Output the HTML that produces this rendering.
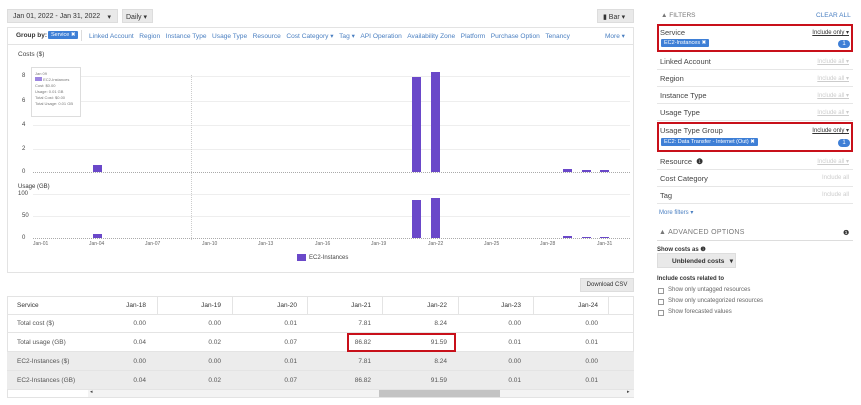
<!DOCTYPE html>
<html><head><meta charset="utf-8"><style>
*{box-sizing:border-box;margin:0;padding:0}
body{width:861px;height:405px;background:#fff;font-family:"Liberation Sans",sans-serif;color:#444;position:relative;overflow:hidden;font-size:7px}
.a{position:absolute;white-space:nowrap}
.btn{position:absolute;background:#e9e9e9;border:1px solid #ddd;font-size:7px;color:#333;padding:3px 5px;white-space:nowrap}
.lnk{color:#4a7fc1}
.gl{position:absolute;height:1px;background:#eee}
.bar{position:absolute;background:#6a48c9}
.row{position:absolute;left:7px;width:627px;height:19px;border-bottom:1px solid #e4e4e4;font-size:6.5px;color:#555}
.row span{position:absolute;top:6px}
.fr{position:absolute;left:657px;width:196px;border-bottom:1px solid #e6e6e6;height:17px;font-size:7.5px;color:#444}
.fr .l{position:absolute;left:3px;top:4px}
.fr .r{position:absolute;right:4px;top:5px;font-size:6px;color:#ccc;text-decoration:underline}
.red{position:absolute;border:2px solid #c8101a}
.chip{position:absolute;background:#3e7fd6;color:#fff;font-size:5.5px;padding:1px 3px;border-radius:1px;white-space:nowrap}
.badge{position:absolute;background:#3e7fd6;color:#fff;font-size:6px;width:12px;height:8px;border-radius:4px;text-align:center;line-height:8px}
.cb{position:absolute;left:658px;width:6px;height:6px;border:1px solid #999}
</style></head><body>
<div class="btn" style="left:7px;top:9px;width:111px;height:14px">Jan 01, 2022 - Jan 31, 2022 <span style="position:absolute;right:6px">▾</span></div>
<div class="btn" style="left:122px;top:9px;width:31px;height:14px;padding:3px 3px">Daily ▾</div>
<div class="btn" style="left:597px;top:9px;width:37px;height:14px">▮ Bar ▾</div>

<div class="a" style="left:7px;top:27px;width:627px;height:246px;border:1px solid #e3e3e3"></div>
<div class="a" style="left:8px;top:28px;width:625px;height:17px;border-bottom:1px solid #e3e3e3"></div>
<div class="a" style="left:16px;top:32px;font-size:6.5px;color:#333;font-weight:bold">Group by:</div>
<div class="chip" style="left:48px;top:31px">Service ✖</div>
<div class="a" style="left:81px;top:30px;width:1px;height:11px;background:#ddd"></div>
<div class="a lnk" style="left:89px;top:32px;font-size:6.6px">Linked Account&nbsp;&nbsp;&nbsp;Region&nbsp;&nbsp;&nbsp;Instance Type&nbsp;&nbsp;&nbsp;Usage Type&nbsp;&nbsp;&nbsp;Resource&nbsp;&nbsp;&nbsp;Cost Category ▾&nbsp;&nbsp;&nbsp;Tag ▾&nbsp;&nbsp;&nbsp;API Operation&nbsp;&nbsp;&nbsp;Availability Zone&nbsp;&nbsp;&nbsp;Platform&nbsp;&nbsp;&nbsp;Purchase Option&nbsp;&nbsp;&nbsp;Tenancy</div>
<div class="a lnk" style="left:605px;top:32px;font-size:6.5px">More ▾</div>

<div class="a" style="left:18px;top:51px;font-size:6.5px">Costs ($)</div>
<div class="a" style="left:22px;top:73px;font-size:6px">8</div>
<div class="a" style="left:22px;top:98px;font-size:6px">6</div>
<div class="a" style="left:22px;top:122px;font-size:6px">4</div>
<div class="a" style="left:22px;top:146px;font-size:6px">2</div>
<div class="a" style="left:22px;top:169px;font-size:6px">0</div>
<div class="gl" style="left:33px;top:76px;width:597px"></div>
<div class="gl" style="left:33px;top:101px;width:597px"></div>
<div class="gl" style="left:33px;top:125px;width:597px"></div>
<div class="gl" style="left:33px;top:149px;width:597px"></div>
<div class="a" style="left:33px;top:172px;width:597px;border-top:1px dotted #aaa"></div>
<div class="a" style="left:191px;top:75px;height:165px;border-left:1px dotted #ccc"></div>
<div class="bar" style="left:93px;top:165px;width:9px;height:7px"></div>
<div class="bar" style="left:412px;top:77px;width:9px;height:95px"></div>
<div class="bar" style="left:431px;top:72px;width:9px;height:100px"></div>
<div class="bar" style="left:563px;top:169px;width:9px;height:3px"></div>
<div class="bar" style="left:582px;top:170px;width:9px;height:2px"></div>
<div class="bar" style="left:600px;top:170px;width:9px;height:2px"></div>

<div class="a" style="left:31px;top:67px;width:50px;height:50px;border:1px solid #ddd;background:#fff;font-size:4px;color:#777;padding:3px;line-height:6px">Jan 09<br><span style="display:inline-block;width:7px;height:4px;background:#9d86e0"></span> EC2-Instances<br>Cost: $0.00<br>Usage: 0.01 GB<br>Total Cost: $0.00<br>Total Usage: 0.01 GB</div>

<div class="a" style="left:18px;top:184px;font-size:6px;color:#333">Usage (GB)</div>
<div class="a" style="left:18px;top:191px;font-size:6px">100</div>
<div class="a" style="left:22px;top:213px;font-size:6px">50</div>
<div class="a" style="left:22px;top:235px;font-size:6px">0</div>
<div class="gl" style="left:33px;top:194px;width:597px"></div>
<div class="gl" style="left:33px;top:216px;width:597px"></div>
<div class="a" style="left:33px;top:238px;width:597px;border-top:1px dotted #aaa"></div>
<div class="bar" style="left:93px;top:234px;width:9px;height:4px"></div>
<div class="bar" style="left:412px;top:200px;width:9px;height:38px"></div>
<div class="bar" style="left:431px;top:198px;width:9px;height:40px"></div>
<div class="bar" style="left:563px;top:236px;width:9px;height:2px"></div>
<div class="bar" style="left:582px;top:237px;width:9px;height:1px"></div>
<div class="bar" style="left:600px;top:237px;width:9px;height:1px"></div>
<div class="a" style="left:33px;top:241px;width:597px;font-size:5px;color:#666">
<span class="a" style="left:0px">Jan-01</span><span class="a" style="left:56px">Jan-04</span><span class="a" style="left:112px">Jan-07</span><span class="a" style="left:169px">Jan-10</span><span class="a" style="left:225px">Jan-13</span><span class="a" style="left:282px">Jan-16</span><span class="a" style="left:338px">Jan-19</span><span class="a" style="left:395px">Jan-22</span><span class="a" style="left:451px">Jan-25</span><span class="a" style="left:507px">Jan-28</span><span class="a" style="left:564px">Jan-31</span></div>
<div class="a" style="left:297px;top:254px;width:9px;height:7px;background:#6a48c9"></div>
<div class="a" style="left:309px;top:255px;font-size:6px">EC2-Instances</div>

<div class="btn" style="left:580px;top:278px;width:54px;height:14px;font-size:6px;padding:3px 0;text-align:center">Download CSV</div>
<div class="a" style="left:7px;top:296px;width:627px;height:102px;border:1px solid #e3e3e3"></div>
<div class="row" style="top:296px;color:#333"><span style="left:10px">Service</span>
<span style="right:488px">Jan-18</span><span style="right:413px">Jan-19</span><span style="right:337px">Jan-20</span><span style="right:263px">Jan-21</span><span style="right:187px">Jan-22</span><span style="right:113px">Jan-23</span><span style="right:36px">Jan-24</span></div>
<div class="a" style="left:157px;top:297px;width:1px;height:17px;background:#e4e4e4;box-shadow:75px 0 #e4e4e4,150px 0 #e4e4e4,225px 0 #e4e4e4,301px 0 #e4e4e4,376px 0 #e4e4e4,451px 0 #e4e4e4"></div>
<div class="row" style="top:314px"><span style="left:10px">Total cost ($)</span><span style="right:488px">0.00</span><span style="right:413px">0.00</span><span style="right:337px">0.01</span><span style="right:263px">7.81</span><span style="right:187px">8.24</span><span style="right:113px">0.00</span><span style="right:36px">0.00</span></div>
<div class="row" style="top:333px"><span style="left:10px">Total usage (GB)</span><span style="right:488px">0.04</span><span style="right:413px">0.02</span><span style="right:337px">0.07</span><span style="right:263px">86.82</span><span style="right:187px">91.59</span><span style="right:113px">0.01</span><span style="right:36px">0.01</span></div>
<div class="row" style="top:352px;background:#ececec"><span style="left:10px">EC2-Instances ($)</span><span style="right:488px">0.00</span><span style="right:413px">0.00</span><span style="right:337px">0.01</span><span style="right:263px">7.81</span><span style="right:187px">8.24</span><span style="right:113px">0.00</span><span style="right:36px">0.00</span></div>
<div class="row" style="top:371px;background:#ececec"><span style="left:10px">EC2-Instances (GB)</span><span style="right:488px">0.04</span><span style="right:413px">0.02</span><span style="right:337px">0.07</span><span style="right:263px">86.82</span><span style="right:187px">91.59</span><span style="right:113px">0.01</span><span style="right:36px">0.01</span></div>
<div class="a" style="left:88px;top:390px;width:546px;height:7px;background:#f3f3f3"></div>
<div class="a" style="left:379px;top:390px;width:121px;height:7px;background:#c3c3c3"></div>
<div class="a" style="left:90px;top:389px;font-size:5px">◂</div>
<div class="a" style="left:627px;top:389px;font-size:5px">▸</div>
<div class="red" style="left:347px;top:333px;width:109px;height:19px"></div>

<div class="a" style="left:661px;top:12px;font-size:6.5px;color:#777">▲ FILTERS</div>
<div class="a lnk" style="left:816px;top:12px;font-size:6.5px">CLEAR ALL</div>
<div class="fr" style="top:24px;height:27px"><span class="l">Service</span><span class="r" style="color:#333">Include only ▾</span></div>
<div class="chip" style="left:661px;top:39px">EC2-Instances ✖</div>
<div class="badge" style="left:838px;top:40px">1</div>
<div class="red" style="left:657px;top:24px;width:196px;height:28px"></div>
<div class="fr" style="top:53px"><span class="l">Linked Account</span><span class="r">Include all ▾</span></div>
<div class="fr" style="top:70px"><span class="l">Region</span><span class="r">Include all ▾</span></div>
<div class="fr" style="top:87px"><span class="l">Instance Type</span><span class="r">Include all ▾</span></div>
<div class="fr" style="top:104px"><span class="l">Usage Type</span><span class="r">Include all ▾</span></div>
<div class="fr" style="top:122px;height:30px"><span class="l">Usage Type Group</span><span class="r" style="color:#333">Include only ▾</span></div>
<div class="chip" style="left:661px;top:138px">EC2: Data Transfer - Internet (Out) ✖</div>
<div class="badge" style="left:838px;top:139px">1</div>
<div class="red" style="left:657px;top:122px;width:196px;height:30px"></div>
<div class="fr" style="top:153px"><span class="l">Resource &nbsp;<b style="color:#333">❶</b></span><span class="r">Include all ▾</span></div>
<div class="fr" style="top:170px"><span class="l">Cost Category</span><span class="r" style="text-decoration:none">Include all</span></div>
<div class="fr" style="top:187px"><span class="l">Tag</span><span class="r" style="text-decoration:none">Include all</span></div>
<div class="a lnk" style="left:659px;top:209px;font-size:6px">More filters ▾</div>
<div class="a" style="left:659px;top:229px;font-size:7px;color:#777;letter-spacing:.3px">▲ ADVANCED OPTIONS</div>
<div class="a" style="left:843px;top:229px;font-size:7px;color:#333">❶</div>
<div class="a" style="left:657px;top:240px;width:196px;height:1px;background:#ddd"></div>
<div class="a" style="left:657px;top:246px;font-size:6px;color:#333;font-weight:bold">Show costs as ❶</div>
<div class="btn" style="left:657px;top:253px;width:79px;height:15px;font-weight:bold;font-size:6.5px;padding:3px 0 0 14px">Unblended costs &nbsp;&nbsp;▾</div>
<div class="a" style="left:657px;top:276px;font-size:6px;color:#333;font-weight:bold">Include costs related to</div>
<div class="cb" style="top:288px"></div><div class="a" style="left:668px;top:287px;font-size:6px;color:#666">Show only untagged resources</div>
<div class="cb" style="top:299px"></div><div class="a" style="left:668px;top:298px;font-size:6px;color:#666">Show only uncategorized resources</div>
<div class="cb" style="top:310px"></div><div class="a" style="left:668px;top:309px;font-size:6px;color:#666">Show forecasted values</div>
</body></html>
